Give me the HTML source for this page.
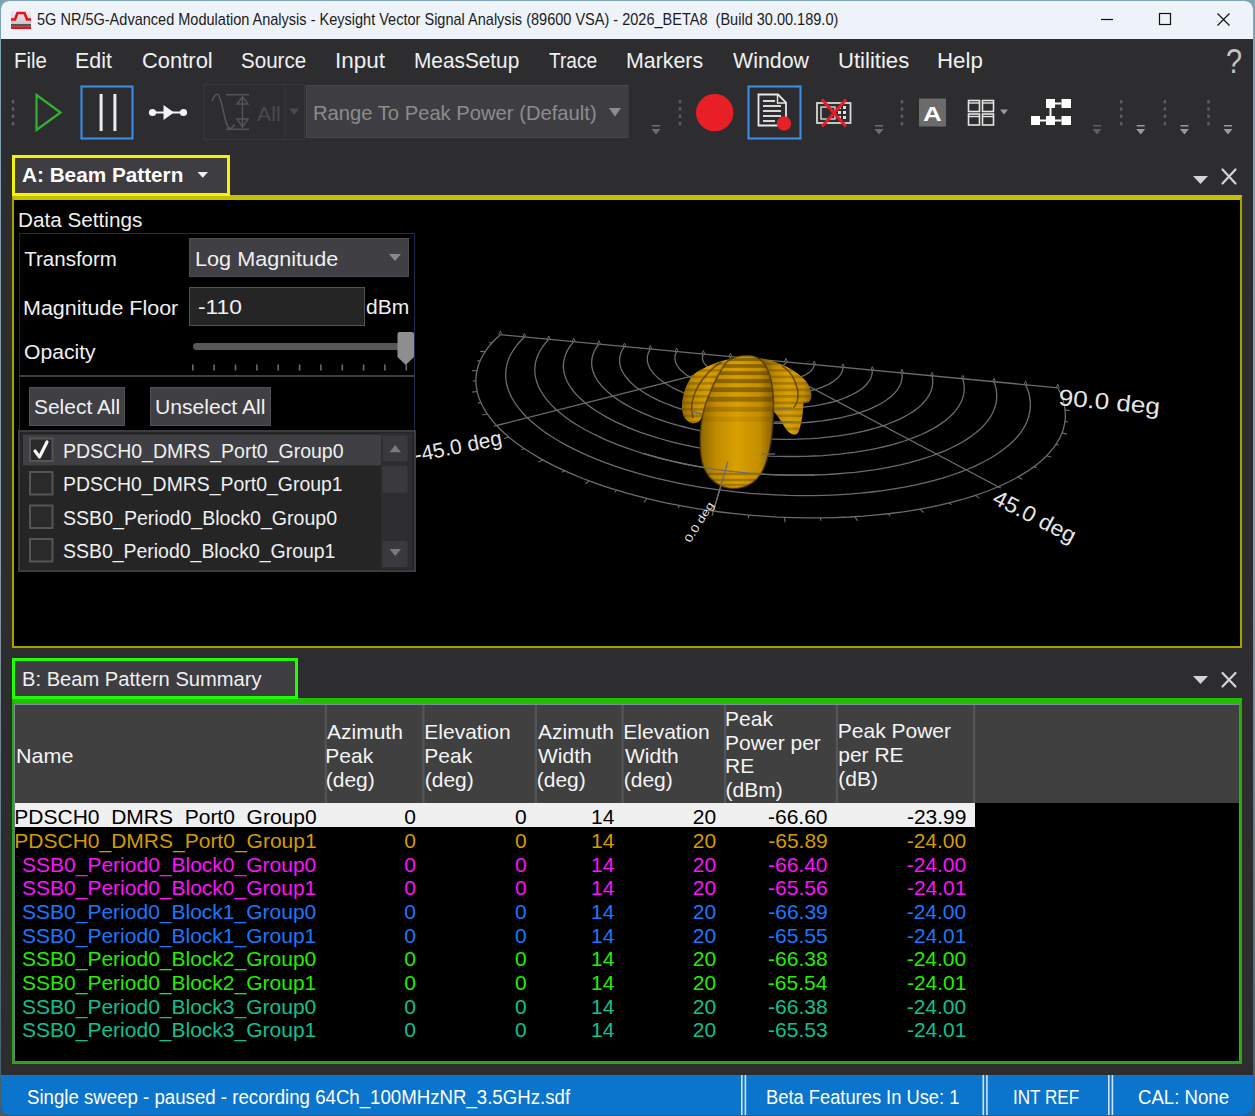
<!DOCTYPE html>
<html><head><meta charset="utf-8"><style>
html,body{margin:0;padding:0;}
body{width:1255px;height:1116px;position:relative;overflow:hidden;background:linear-gradient(180deg,#7fa3b3 0%,#8a9ba5 50%,#3f5d6a 100%);font-family:"Liberation Sans",sans-serif;}
.t{position:absolute;white-space:nowrap;transform-origin:0 0;}
.r{position:absolute;box-sizing:border-box;}
svg{position:absolute;left:0;top:0;overflow:visible;}
</style></head><body>
<div class="r" style="left:1px;top:1px;width:1252px;height:1114px;background:#2d2d30;border-radius:8px;overflow:hidden;"></div>
<div class="r" style="left:1px;top:1px;width:1252px;height:38px;background:#eef3f9;border-radius:8px 8px 0 0;"></div>
<div class="r" style="left:1px;top:1075px;width:1252px;height:40px;background:#0b74cc;border-radius:0 0 8px 8px;"></div>
<svg width="1255" height="40" style="left:0;top:0">
<defs><linearGradient id="ig" x1="0" y1="0" x2="0" y2="1"><stop offset="0" stop-color="#f4f4f4"/><stop offset="1" stop-color="#b8b8b8"/></linearGradient></defs>
<rect x="11" y="9" width="20" height="20" fill="url(#ig)"/>
<path d="M11 19.5 L15 19.5 L17.5 13 L24.5 13 L27 19.5 L31 19.5" stroke="#e8101e" stroke-width="2.6" fill="none"/>
<rect x="11" y="24" width="20" height="2.5" fill="#555"/>
<rect x="11" y="26.5" width="20" height="2.5" fill="#e8101e"/>
<line x1="1101" y1="19.5" x2="1113" y2="19.5" stroke="#111" stroke-width="1.2"/>
<rect x="1159.5" y="13.5" width="11" height="11" fill="none" stroke="#111" stroke-width="1.2"/>
<path d="M1217.5 13.5 L1229.5 25.5 M1229.5 13.5 L1217.5 25.5" stroke="#111" stroke-width="1.2"/>
</svg>
<div class="t" style="left:37.02px;top:11.55px;font-size:15.7px;line-height:15.7px;color:#1b1b1b;transform:scaleX(0.9257);">5G NR/5G-Advanced Modulation Analysis - Keysight Vector Signal Analysis (89600 VSA) - 2026_BETA8&nbsp; (Build 30.00.189.0)</div>
<div class="t" style="left:14.07px;top:50.52px;font-size:21.5px;line-height:21.5px;color:#f0f0f0;transform:scaleX(0.9490);">File</div>
<div class="t" style="left:75.29px;top:50.52px;font-size:21.5px;line-height:21.5px;color:#f0f0f0;transform:scaleX(0.9955);">Edit</div>
<div class="t" style="left:142.20px;top:50.52px;font-size:21.5px;line-height:21.5px;color:#f0f0f0;transform:scaleX(1.0200);">Control</div>
<div class="t" style="left:241.08px;top:50.52px;font-size:21.5px;line-height:21.5px;color:#f0f0f0;transform:scaleX(0.9559);">Source</div>
<div class="t" style="left:335.48px;top:50.52px;font-size:21.5px;line-height:21.5px;color:#f0f0f0;transform:scaleX(1.0460);">Input</div>
<div class="t" style="left:414.34px;top:50.52px;font-size:21.5px;line-height:21.5px;color:#f0f0f0;transform:scaleX(0.9679);">MeasSetup</div>
<div class="t" style="left:549.02px;top:50.52px;font-size:21.5px;line-height:21.5px;color:#f0f0f0;transform:scaleX(0.8886);">Trace</div>
<div class="t" style="left:625.99px;top:50.52px;font-size:21.5px;line-height:21.5px;color:#f0f0f0;transform:scaleX(0.9928);">Markers</div>
<div class="t" style="left:732.70px;top:50.52px;font-size:21.5px;line-height:21.5px;color:#f0f0f0;transform:scaleX(0.9929);">Window</div>
<div class="t" style="left:837.54px;top:50.52px;font-size:21.5px;line-height:21.5px;color:#f0f0f0;transform:scaleX(1.0273);">Utilities</div>
<div class="t" style="left:937.12px;top:50.52px;font-size:21.5px;line-height:21.5px;color:#f0f0f0;transform:scaleX(1.0360);">Help</div>
<div class="t" style="left:1226.05px;top:43.25px;font-size:35px;line-height:35px;color:#c4c4c4;transform:scaleX(0.8214);">?</div>
<svg width="1255" height="150" style="left:0;top:0">
<rect x="11.75" y="100.0" width="2.5" height="3.4" fill="#5c5c60"/><rect x="11.75" y="107.3" width="2.5" height="3.4" fill="#5c5c60"/><rect x="11.75" y="114.6" width="2.5" height="3.4" fill="#5c5c60"/><rect x="11.75" y="121.9" width="2.5" height="3.4" fill="#5c5c60"/>
<path d="M36.5 95 L60.5 112.5 L36.5 130 Z" fill="none" stroke="#32b232" stroke-width="2.2" stroke-linejoin="miter"/>
<rect x="81.5" y="86.5" width="51" height="52" fill="none" stroke="#3a8ee8" stroke-width="2.1"/>
<rect x="99.6" y="94" width="3" height="37" fill="#ececec"/>
<rect x="113.4" y="94" width="3" height="37" fill="#ececec"/>
<line x1="152" y1="112.5" x2="183" y2="112.5" stroke="#f4f4f4" stroke-width="2"/>
<circle cx="152.5" cy="112.5" r="3.6" fill="#f4f4f4"/><circle cx="183.5" cy="112.5" r="3.6" fill="#f4f4f4"/>
<path d="M163.5 105 L174 112.5 L163.5 120 Z" fill="#f4f4f4"/>
<rect x="204" y="84.5" width="100.5" height="55" fill="none" stroke="#38383b" stroke-width="1"/>
<line x1="285" y1="85" x2="285" y2="139" stroke="#38383b" stroke-width="1"/>
<path d="M212 101 C214 96 216 93.5 218 94.5 C221 96 223 112 226 122 C227.5 127 229.5 129.5 231.5 128 C233 127 234 125.5 234.5 124.5" fill="none" stroke="#545457" stroke-width="1.6"/>
<line x1="226" y1="94.7" x2="249" y2="94.7" stroke="#545457" stroke-width="1.6"/>
<line x1="242.5" y1="97" x2="242.5" y2="128" stroke="#545457" stroke-width="1.4"/>
<path d="M237 104 L242.5 97 L248 104 Z" fill="none" stroke="#545457" stroke-width="1.4"/>
<path d="M237 119 L242.5 127 L248 119 Z" fill="none" stroke="#545457" stroke-width="1.4"/>
<line x1="226" y1="129.3" x2="249" y2="129.3" stroke="#545457" stroke-width="1.6"/>
<path d="M289 108.5 L299 108.5 L294 115 Z" fill="#4a4a4d"/>
<rect x="306.5" y="85.5" width="321.5" height="52" fill="#3e3e42" stroke="#47474b" stroke-width="1"/>
<path d="M609 108 L621 108 L615 116.5 Z" fill="#8c8c8c"/>
<rect x="652" y="125" width="8" height="1.5" fill="#6e6e72"/><path d="M651.5 129 L660.5 129 L656 134.5 Z" fill="#6e6e72"/>
<rect x="678.75" y="100.0" width="2.5" height="3.4" fill="#5c5c60"/><rect x="678.75" y="107.3" width="2.5" height="3.4" fill="#5c5c60"/><rect x="678.75" y="114.6" width="2.5" height="3.4" fill="#5c5c60"/><rect x="678.75" y="121.9" width="2.5" height="3.4" fill="#5c5c60"/>
<circle cx="714.7" cy="112.6" r="18.7" fill="#e81f27"/>
<rect x="748.5" y="86.5" width="52" height="52" fill="none" stroke="#3a8ee8" stroke-width="2.1"/>
<path d="M758.5 94.5 L778 94.5 L786 102.5 L786 125.5 L758.5 125.5 Z" fill="none" stroke="#e8e8e8" stroke-width="1.8"/>
<path d="M777.5 94.5 L777.5 103 L786 103" fill="none" stroke="#e8e8e8" stroke-width="1.4"/>
<rect x="763" y="100" width="12" height="2" fill="#d8d8d8"/>
<rect x="763" y="105" width="18" height="2" fill="#d8d8d8"/>
<rect x="763" y="110" width="18" height="2" fill="#d8d8d8"/>
<rect x="763" y="115" width="18" height="2" fill="#d8d8d8"/>
<rect x="763" y="120" width="12" height="2" fill="#d8d8d8"/>
<circle cx="784" cy="123.5" r="7.2" fill="#e81f27"/>
<rect x="817" y="103" width="33.5" height="20" fill="none" stroke="#d8d8d8" stroke-width="1.8"/>
<rect x="821" y="107" width="14" height="12" fill="none" stroke="#d8d8d8" stroke-width="1.4"/>
<rect x="838" y="106" width="3" height="3" fill="#e0e0e0"/><rect x="843" y="106" width="3" height="3" fill="#e0e0e0"/>
<rect x="838" y="111" width="3" height="3" fill="#e0e0e0"/><rect x="843" y="111" width="3" height="3" fill="#e0e0e0"/>
<rect x="838" y="116" width="3" height="3" fill="#e0e0e0"/><rect x="843" y="116" width="3" height="3" fill="#e0e0e0"/>
<path d="M822 99.5 L846 126.5 M846 99.5 L822 126.5" stroke="#e41e26" stroke-width="3"/>
<rect x="875" y="125" width="8" height="1.5" fill="#6e6e72"/><path d="M874.5 129 L883.5 129 L879 134.5 Z" fill="#6e6e72"/>
<rect x="900.75" y="100.0" width="2.5" height="3.4" fill="#5c5c60"/><rect x="900.75" y="107.3" width="2.5" height="3.4" fill="#5c5c60"/><rect x="900.75" y="114.6" width="2.5" height="3.4" fill="#5c5c60"/><rect x="900.75" y="121.9" width="2.5" height="3.4" fill="#5c5c60"/>
<rect x="919" y="98.5" width="27" height="28" fill="#6b6b6b"/>
<rect x="968.5" y="100.5" width="11" height="11" fill="none" stroke="#e4e4e4" stroke-width="1.6"/>
<rect x="982.5" y="100.5" width="11" height="11" fill="none" stroke="#e4e4e4" stroke-width="1.6"/>
<rect x="968.5" y="114" width="11" height="11" fill="none" stroke="#e4e4e4" stroke-width="1.6"/>
<rect x="982.5" y="114" width="11" height="11" fill="none" stroke="#e4e4e4" stroke-width="1.6"/>
<line x1="968.5" y1="103" x2="979.5" y2="103" stroke="#e4e4e4" stroke-width="1.4"/>
<line x1="982.5" y1="103" x2="993.5" y2="103" stroke="#e4e4e4" stroke-width="1.4"/>
<line x1="968.5" y1="116.5" x2="979.5" y2="116.5" stroke="#e4e4e4" stroke-width="1.4"/>
<line x1="982.5" y1="116.5" x2="993.5" y2="116.5" stroke="#e4e4e4" stroke-width="1.4"/>
<path d="M1000 109.5 L1008 109.5 L1004 114.5 Z" fill="#9a9a9a"/>
<rect x="1046" y="99" width="9" height="9" fill="#ffffff"/>
<rect x="1061.5" y="99" width="9.5" height="9" fill="#ffffff"/>
<rect x="1031" y="116" width="9" height="9" fill="#ffffff"/>
<rect x="1046" y="116" width="9" height="9" fill="#ffffff"/>
<rect x="1061.5" y="116" width="9.5" height="9" fill="#ffffff"/>
<line x1="1055" y1="103.5" x2="1061.5" y2="103.5" stroke="#fff" stroke-width="2"/>
<line x1="1050.5" y1="108" x2="1050.5" y2="116" stroke="#fff" stroke-width="2"/>
<line x1="1040" y1="120.5" x2="1061.5" y2="120.5" stroke="#fff" stroke-width="2"/>
<rect x="1093" y="125" width="8" height="1.5" fill="#5e5e60"/><path d="M1092.5 129 L1101.5 129 L1097 134.5 Z" fill="#5e5e60"/>
<rect x="1119.95" y="100.0" width="2.5" height="3.4" fill="#5c5c60"/><rect x="1119.95" y="107.3" width="2.5" height="3.4" fill="#5c5c60"/><rect x="1119.95" y="114.6" width="2.5" height="3.4" fill="#5c5c60"/><rect x="1119.95" y="121.9" width="2.5" height="3.4" fill="#5c5c60"/>
<rect x="1136.7" y="125" width="8" height="1.5" fill="#9a9a9a"/><path d="M1136.2 129 L1145.2 129 L1140.7 134.5 Z" fill="#9a9a9a"/>
<rect x="1163.65" y="100.0" width="2.5" height="3.4" fill="#5c5c60"/><rect x="1163.65" y="107.3" width="2.5" height="3.4" fill="#5c5c60"/><rect x="1163.65" y="114.6" width="2.5" height="3.4" fill="#5c5c60"/><rect x="1163.65" y="121.9" width="2.5" height="3.4" fill="#5c5c60"/>
<rect x="1180.4" y="125" width="8" height="1.5" fill="#9a9a9a"/><path d="M1179.9 129 L1188.9 129 L1184.4 134.5 Z" fill="#9a9a9a"/>
<rect x="1207.25" y="100.0" width="2.5" height="3.4" fill="#5c5c60"/><rect x="1207.25" y="107.3" width="2.5" height="3.4" fill="#5c5c60"/><rect x="1207.25" y="114.6" width="2.5" height="3.4" fill="#5c5c60"/><rect x="1207.25" y="121.9" width="2.5" height="3.4" fill="#5c5c60"/>
<rect x="1224" y="125" width="8" height="1.5" fill="#9a9a9a"/><path d="M1223.5 129 L1232.5 129 L1228 134.5 Z" fill="#9a9a9a"/>
</svg>
<div class="t" style="left:257.00px;top:104.00px;font-size:20px;line-height:20px;color:#4a4a4d;transform:scaleX(1.0619);">All</div>
<div class="t" style="left:312.98px;top:101.95px;font-size:21px;line-height:21px;color:#8c8c8c;transform:scaleX(0.9616);">Range To Peak Power (Default)</div>
<div class="t" style="left:922.85px;top:103.15px;font-size:21px;line-height:21px;color:#ffffff;font-weight:bold;transform:scaleX(1.2346);">A</div>
<div class="r" style="left:12px;top:195px;width:1230px;height:453px;background:#000;border:2px solid #a8a200;border-top:5px solid #c4c000;"></div>
<div class="r" style="left:12px;top:155px;width:218px;height:41px;background:#3d3d42;border:3px solid #f4f400;"></div>
<div class="t" style="left:22.28px;top:165.38px;font-size:20.5px;line-height:20.5px;color:#ffffff;font-weight:bold;transform:scaleX(1.0117);">A: Beam Pattern</div>
<svg width="1255" height="700" style="left:0;top:0">
<path d="M197.5 172 L208 172 L202.75 177.8 Z" fill="#f0f0f0"/>
<path d="M1193 176 L1208 176 L1200.5 184 Z" fill="#d4d4d4"/>
<path d="M1222.5 169.5 L1235.5 183.5 M1235.5 169.5 L1222.5 183.5" stroke="#d4d4d4" stroke-width="2.2" stroke-linecap="round"/>
<path d="M1193 676 L1208 676 L1200.5 684 Z" fill="#d4d4d4"/>
<path d="M1222.5 673 L1235.5 686.5 M1235.5 673 L1222.5 686.5" stroke="#d4d4d4" stroke-width="2.2" stroke-linecap="round"/>
</svg>
<svg width="1255" height="700" style="left:0;top:0">
<defs><linearGradient id="lobeg_ll1" gradientUnits="userSpaceOnUse" x1="680" y1="0" x2="737" y2="0"><stop offset="0" stop-color="#8a6300"/><stop offset="0.22" stop-color="#c08b00"/><stop offset="0.5" stop-color="#d9a000"/><stop offset="0.8" stop-color="#c28d00"/><stop offset="1" stop-color="#7e5a00"/></linearGradient><linearGradient id="lobeg_ll2" gradientUnits="userSpaceOnUse" x1="695" y1="0" x2="735" y2="0"><stop offset="0" stop-color="#8a6300"/><stop offset="0.22" stop-color="#c08b00"/><stop offset="0.5" stop-color="#d9a000"/><stop offset="0.8" stop-color="#c28d00"/><stop offset="1" stop-color="#7e5a00"/></linearGradient><linearGradient id="lobeg_rl1" gradientUnits="userSpaceOnUse" x1="764" y1="0" x2="814" y2="0"><stop offset="0" stop-color="#8a6300"/><stop offset="0.22" stop-color="#c08b00"/><stop offset="0.5" stop-color="#d9a000"/><stop offset="0.8" stop-color="#c28d00"/><stop offset="1" stop-color="#7e5a00"/></linearGradient><linearGradient id="lobeg_rl2" gradientUnits="userSpaceOnUse" x1="770" y1="0" x2="803" y2="0"><stop offset="0" stop-color="#8a6300"/><stop offset="0.22" stop-color="#c08b00"/><stop offset="0.5" stop-color="#d9a000"/><stop offset="0.8" stop-color="#c28d00"/><stop offset="1" stop-color="#7e5a00"/></linearGradient><linearGradient id="lobeg_ml" gradientUnits="userSpaceOnUse" x1="699" y1="0" x2="775" y2="0"><stop offset="0" stop-color="#8a6300"/><stop offset="0.22" stop-color="#c08b00"/><stop offset="0.5" stop-color="#d9a000"/><stop offset="0.8" stop-color="#c28d00"/><stop offset="1" stop-color="#7e5a00"/></linearGradient></defs>
<polyline points="730.4,356.7 730.3,357.0 730.2,357.4 730.2,357.8 730.1,358.1 730.2,358.5 730.2,358.9 730.3,359.3 730.4,359.7 730.6,360.0 730.8,360.4 731.0,360.8 731.2,361.2 731.5,361.6 731.9,361.9 732.2,362.3 732.6,362.7 733.0,363.0 733.5,363.4 734.0,363.8 734.5,364.1 735.1,364.5 735.6,364.8 736.3,365.1 736.9,365.5 737.6,365.8 738.3,366.1 739.0,366.4 739.7,366.7 740.5,367.0 741.3,367.3 742.1,367.5 742.9,367.8 743.8,368.1 744.7,368.3 745.6,368.5 746.5,368.7 747.4,368.9 748.4,369.1 749.3,369.3 750.3,369.5 751.3,369.6 752.3,369.8 753.3,369.9 754.3,370.0 755.3,370.1 756.3,370.2 757.3,370.3 758.3,370.3 759.3,370.4 760.3,370.4 761.4,370.4 762.4,370.4 763.4,370.4 764.4,370.4 765.3,370.3 766.3,370.3 767.3,370.2 768.2,370.1 769.2,370.0 770.1,369.9 771.0,369.8 771.9,369.6 772.8,369.5 773.6,369.3 774.5,369.1 775.3,368.9 776.0,368.7 776.8,368.5 777.5,368.3 778.3,368.1 778.9,367.8 779.6,367.6 780.2,367.3 780.8,367.0 781.4,366.7 781.9,366.4 782.4,366.1 782.9,365.8 783.3,365.5 783.7,365.1 784.1,364.8 784.5,364.5 784.8,364.1 785.0,363.8 785.3,363.4 785.5,363.0 785.6,362.7 785.8,362.3 785.9,361.9" fill="none" stroke="#6c6c6c" stroke-width="1.3"/><polyline points="703.3,354.1 703.0,354.8 702.8,355.5 702.6,356.3 702.5,357.0 702.5,357.8 702.5,358.5 702.6,359.3 702.8,360.0 703.1,360.8 703.4,361.6 703.8,362.3 704.2,363.1 704.8,363.9 705.4,364.6 706.0,365.4 706.8,366.1 707.6,366.9 708.4,367.6 709.4,368.4 710.4,369.1 711.5,369.8 712.6,370.5 713.8,371.2 715.1,371.9 716.4,372.6 717.8,373.2 719.2,373.9 720.7,374.5 722.2,375.1 723.8,375.7 725.5,376.2 727.2,376.8 728.9,377.3 730.7,377.8 732.5,378.3 734.4,378.7 736.3,379.2 738.2,379.6 740.2,380.0 742.2,380.3 744.2,380.6 746.2,380.9 748.3,381.2 750.4,381.4 752.4,381.7 754.5,381.8 756.6,382.0 758.7,382.1 760.8,382.2 762.9,382.3 765.0,382.3 767.1,382.3 769.2,382.3 771.2,382.2 773.3,382.1 775.3,382.0 777.3,381.8 779.2,381.7 781.2,381.4 783.1,381.2 784.9,380.9 786.8,380.6 788.5,380.3 790.3,380.0 792.0,379.6 793.6,379.2 795.2,378.7 796.8,378.3 798.2,377.8 799.7,377.3 801.0,376.8 802.3,376.2 803.6,375.7 804.8,375.1 805.9,374.5 806.9,373.9 807.9,373.2 808.8,372.6 809.7,371.9 810.5,371.2 811.2,370.5 811.8,369.8 812.4,369.1 812.8,368.4 813.3,367.6 813.6,366.9 813.9,366.2 814.1,365.4 814.2,364.6" fill="none" stroke="#6c6c6c" stroke-width="1.3"/><polyline points="676.6,351.5 676.1,352.6 675.7,353.7 675.3,354.8 675.1,355.9 674.9,357.0 674.9,358.1 675.0,359.3 675.2,360.4 675.4,361.6 675.8,362.7 676.3,363.9 676.9,365.0 677.6,366.2 678.4,367.4 679.3,368.5 680.4,369.7 681.5,370.8 682.7,372.0 684.1,373.1 685.5,374.2 687.1,375.3 688.8,376.4 690.5,377.5 692.4,378.6 694.3,379.6 696.4,380.6 698.5,381.6 700.8,382.6 703.1,383.6 705.5,384.5 708.0,385.4 710.6,386.2 713.2,387.1 715.9,387.9 718.7,388.6 721.6,389.4 724.5,390.0 727.5,390.7 730.5,391.3 733.5,391.9 736.6,392.4 739.8,392.8 743.0,393.3 746.2,393.7 749.4,394.0 752.7,394.3 755.9,394.5 759.2,394.7 762.4,394.9 765.7,395.0 769.0,395.0 772.2,395.0 775.4,395.0 778.6,394.9 781.8,394.7 784.9,394.5 788.0,394.3 791.0,394.0 794.0,393.7 796.9,393.3 799.8,392.8 802.6,392.4 805.3,391.8 808.0,391.3 810.6,390.7 813.1,390.0 815.5,389.3 817.9,388.6 820.1,387.9 822.2,387.1 824.3,386.2 826.3,385.4 828.1,384.5 829.9,383.6 831.5,382.6 833.1,381.6 834.5,380.6 835.8,379.6 837.0,378.6 838.1,377.5 839.1,376.4 840.0,375.3 840.8,374.2 841.4,373.1 842.0,372.0 842.4,370.8 842.7,369.7 842.9,368.5 843.0,367.4" fill="none" stroke="#6c6c6c" stroke-width="1.3"/><polyline points="650.3,349.0 649.5,350.4 648.8,351.9 648.2,353.3 647.8,354.8 647.5,356.2 647.3,357.7 647.3,359.3 647.4,360.8 647.7,362.3 648.0,363.9 648.6,365.4 649.2,367.0 650.1,368.6 651.0,370.1 652.1,371.7 653.4,373.3 654.8,374.9 656.4,376.4 658.1,378.0 659.9,379.5 661.9,381.0 664.1,382.6 666.4,384.0 668.8,385.5 671.4,387.0 674.1,388.4 676.9,389.8 679.9,391.1 683.0,392.5 686.2,393.8 689.6,395.0 693.0,396.2 696.6,397.4 700.3,398.5 704.1,399.6 707.9,400.6 711.9,401.6 716.0,402.5 720.1,403.4 724.3,404.2 728.6,404.9 732.9,405.6 737.3,406.2 741.7,406.8 746.2,407.2 750.6,407.7 755.1,408.0 759.7,408.3 764.2,408.5 768.7,408.6 773.2,408.7 777.7,408.7 782.1,408.6 786.5,408.5 790.9,408.3 795.2,408.0 799.4,407.6 803.6,407.2 807.7,406.7 811.7,406.2 815.7,405.6 819.5,404.9 823.2,404.1 826.9,403.3 830.4,402.5 833.8,401.6 837.1,400.6 840.2,399.6 843.2,398.5 846.1,397.4 848.8,396.2 851.4,395.0 853.9,393.7 856.2,392.4 858.3,391.1 860.3,389.8 862.2,388.4 863.9,387.0 865.4,385.5 866.8,384.0 868.0,382.5 869.1,381.0 870.0,379.5 870.8,378.0 871.4,376.4 871.8,374.9 872.1,373.3 872.3,371.7 872.3,370.2" fill="none" stroke="#6c6c6c" stroke-width="1.3"/><polyline points="624.4,346.6 623.2,348.3 622.2,350.0 621.4,351.8 620.7,353.6 620.2,355.5 619.8,357.4 619.6,359.2 619.6,361.2 619.7,363.1 620.0,365.0 620.6,367.0 621.2,369.0 622.1,371.0 623.2,373.0 624.4,375.0 625.9,377.0 627.5,379.0 629.3,381.0 631.3,383.0 633.5,385.0 635.9,386.9 638.5,388.9 641.3,390.8 644.2,392.7 647.4,394.6 650.7,396.5 654.3,398.3 658.0,400.1 661.8,401.8 665.9,403.5 670.1,405.2 674.5,406.8 679.0,408.3 683.7,409.8 688.5,411.2 693.5,412.6 698.5,413.9 703.7,415.1 709.0,416.3 714.5,417.3 720.0,418.3 725.5,419.2 731.2,420.1 736.9,420.8 742.7,421.5 748.5,422.0 754.3,422.5 760.2,422.9 766.0,423.1 771.9,423.3 777.7,423.4 783.5,423.4 789.3,423.3 795.0,423.1 800.7,422.8 806.2,422.5 811.7,422.0 817.1,421.4 822.4,420.8 827.6,420.0 832.7,419.2 837.6,418.3 842.4,417.3 847.0,416.2 851.5,415.1 855.8,413.8 860.0,412.6 863.9,411.2 867.7,409.8 871.3,408.3 874.8,406.7 878.0,405.1 881.0,403.5 883.8,401.8 886.5,400.0 888.9,398.3 891.1,396.4 893.1,394.6 894.9,392.7 896.5,390.8 897.9,388.9 899.1,386.9 900.1,385.0 900.9,383.0 901.5,381.0 901.9,379.0 902.1,377.0 902.1,375.0 902.0,373.0" fill="none" stroke="#6c6c6c" stroke-width="1.3"/><polyline points="598.8,344.1 597.3,346.2 595.9,348.3 594.8,350.4 593.7,352.5 592.9,354.7 592.3,357.0 591.9,359.2 591.7,361.5 591.7,363.9 591.8,366.2 592.3,368.6 592.9,371.0 593.8,373.4 594.8,375.9 596.2,378.3 597.7,380.8 599.5,383.2 601.5,385.7 603.8,388.1 606.3,390.6 609.0,393.0 612.0,395.5 615.2,397.9 618.7,400.3 622.4,402.6 626.3,404.9 630.5,407.2 634.9,409.5 639.6,411.7 644.5,413.8 649.5,415.9 654.8,418.0 660.3,419.9 666.0,421.8 671.9,423.7 678.0,425.4 684.2,427.0 690.6,428.6 697.2,430.1 703.9,431.5 710.7,432.7 717.6,433.9 724.6,435.0 731.7,435.9 738.9,436.8 746.2,437.5 753.4,438.1 760.7,438.6 768.0,439.0 775.3,439.2 782.6,439.3 789.9,439.3 797.1,439.2 804.2,438.9 811.2,438.6 818.2,438.1 825.0,437.4 831.7,436.7 838.3,435.9 844.7,434.9 850.9,433.8 857.0,432.7 862.9,431.4 868.6,430.0 874.1,428.5 879.3,426.9 884.4,425.3 889.2,423.5 893.8,421.7 898.1,419.8 902.2,417.9 906.0,415.8 909.6,413.7 912.9,411.6 916.0,409.4 918.8,407.2 921.3,404.9 923.6,402.5 925.6,400.2 927.4,397.8 928.9,395.4 930.2,393.0 931.2,390.6 931.9,388.1 932.4,385.7 932.7,383.2 932.7,380.8 932.6,378.3 932.1,375.9" fill="none" stroke="#6c6c6c" stroke-width="1.3"/><polyline points="573.7,341.7 571.7,344.1 569.9,346.5 568.3,348.9 567.0,351.4 565.8,354.0 564.9,356.6 564.2,359.2 563.7,361.9 563.4,364.7 563.4,367.4 563.7,370.2 564.2,373.0 565.0,375.9 566.0,378.8 567.3,381.7 568.9,384.6 570.8,387.6 573.0,390.5 575.4,393.5 578.1,396.4 581.2,399.3 584.5,402.3 588.1,405.2 592.1,408.1 596.3,411.0 600.8,413.8 605.6,416.6 610.7,419.4 616.1,422.1 621.8,424.7 627.8,427.3 634.0,429.8 640.5,432.3 647.3,434.6 654.3,436.9 661.5,439.0 668.9,441.1 676.6,443.1 684.5,444.9 692.5,446.6 700.7,448.2 709.1,449.7 717.6,451.1 726.2,452.3 734.9,453.3 743.6,454.2 752.5,455.0 761.3,455.6 770.2,456.1 779.1,456.4 787.9,456.5 796.7,456.5 805.5,456.4 814.1,456.0 822.7,455.6 831.1,454.9 839.3,454.2 847.4,453.2 855.4,452.2 863.1,450.9 870.6,449.6 877.9,448.1 884.9,446.5 891.7,444.8 898.2,442.9 904.5,441.0 910.4,438.9 916.1,436.7 921.4,434.5 926.5,432.1 931.2,429.7 935.6,427.1 939.7,424.6 943.5,421.9 947.0,419.2 950.1,416.5 952.9,413.7 955.4,410.9 957.6,408.0 959.4,405.1 961.0,402.2 962.2,399.3 963.2,396.3 963.8,393.4 964.2,390.5 964.2,387.5 964.0,384.6 963.5,381.7 962.8,378.8" fill="none" stroke="#6c6c6c" stroke-width="1.3"/><polyline points="548.8,339.4 546.4,342.0 544.2,344.7 542.1,347.5 540.3,350.3 538.8,353.2 537.5,356.2 536.4,359.2 535.6,362.3 535.1,365.4 534.8,368.6 534.8,371.8 535.1,375.1 535.8,378.4 536.7,381.8 537.9,385.2 539.5,388.6 541.4,392.0 543.6,395.5 546.2,398.9 549.1,402.4 552.3,405.9 556.0,409.4 559.9,412.8 564.3,416.3 569.0,419.7 574.0,423.1 579.5,426.5 585.2,429.8 591.4,433.0 597.9,436.2 604.7,439.4 611.9,442.4 619.4,445.4 627.2,448.2 635.4,451.0 643.8,453.7 652.5,456.2 661.5,458.6 670.8,460.9 680.3,463.0 690.0,465.0 699.9,466.8 709.9,468.5 720.1,469.9 730.5,471.3 740.9,472.4 751.4,473.3 762.0,474.1 772.6,474.7 783.1,475.0 793.7,475.2 804.2,475.2 814.6,475.0 824.9,474.6 835.1,474.0 845.1,473.2 854.9,472.3 864.5,471.1 873.9,469.8 883.0,468.3 891.8,466.6 900.4,464.8 908.6,462.8 916.6,460.7 924.2,458.4 931.4,456.0 938.3,453.4 944.8,450.8 950.9,448.0 956.7,445.1 962.1,442.2 967.0,439.1 971.6,436.0 975.8,432.8 979.6,429.6 983.0,426.3 986.0,422.9 988.6,419.5 990.9,416.1 992.7,412.7 994.2,409.2 995.4,405.8 996.2,402.3 996.6,398.8 996.7,395.4 996.5,391.9 996.0,388.5 995.1,385.1 994.0,381.8" fill="none" stroke="#6c6c6c" stroke-width="1.3"/><polyline points="524.4,337.0 521.4,340.0 518.7,343.0 516.2,346.1 513.9,349.3 511.9,352.5 510.1,355.8 508.6,359.2 507.4,362.7 506.6,366.2 506.0,369.8 505.7,373.5 505.7,377.2 506.1,381.0 506.8,384.8 507.9,388.7 509.4,392.6 511.2,396.6 513.4,400.5 516.1,404.6 519.1,408.6 522.5,412.7 526.3,416.7 530.6,420.8 535.3,424.8 540.4,428.8 545.9,432.9 551.9,436.8 558.4,440.8 565.2,444.6 572.5,448.4 580.2,452.2 588.3,455.8 596.9,459.4 605.8,462.8 615.1,466.2 624.8,469.4 634.9,472.4 645.3,475.3 656.0,478.1 667.0,480.7 678.3,483.1 689.9,485.3 701.6,487.3 713.6,489.1 725.7,490.7 737.9,492.1 750.3,493.3 762.7,494.2 775.1,494.9 787.6,495.4 800.0,495.6 812.3,495.6 824.6,495.3 836.7,494.8 848.6,494.1 860.3,493.2 871.8,492.0 883.0,490.6 893.9,488.9 904.5,487.1 914.8,485.1 924.7,482.8 934.3,480.4 943.4,477.8 952.1,475.0 960.3,472.1 968.2,469.0 975.5,465.8 982.4,462.5 988.9,459.0 994.8,455.5 1000.3,451.8 1005.3,448.1 1009.9,444.3 1013.9,440.5 1017.5,436.5 1020.7,432.6 1023.3,428.6 1025.6,424.6 1027.4,420.5 1028.7,416.5 1029.7,412.5 1030.2,408.4 1030.4,404.4 1030.1,400.4 1029.5,396.5 1028.6,392.5 1027.3,388.6 1025.6,384.8" fill="none" stroke="#6c6c6c" stroke-width="1.3"/><polyline points="500.3,334.7 496.7,338.0 493.4,341.3 490.4,344.7 487.6,348.2 485.1,351.8 482.8,355.5 480.9,359.2 479.2,363.1 477.9,367.0 476.9,371.0 476.2,375.1 475.9,379.3 476.0,383.6 476.5,387.9 477.3,392.3 478.6,396.7 480.3,401.2 482.4,405.8 485.0,410.4 488.0,415.0 491.5,419.7 495.5,424.4 500.0,429.0 505.0,433.7 510.4,438.4 516.4,443.1 522.9,447.7 530.0,452.3 537.5,456.9 545.6,461.4 554.1,465.8 563.2,470.1 572.8,474.3 582.9,478.5 593.4,482.4 604.4,486.3 615.9,489.9 627.7,493.4 640.0,496.7 652.7,499.9 665.7,502.8 679.0,505.4 692.6,507.9 706.4,510.1 720.5,512.0 734.7,513.7 749.0,515.1 763.5,516.2 778.0,517.1 792.4,517.6 806.9,517.9 821.2,517.9 835.5,517.6 849.5,517.0 863.3,516.1 876.9,514.9 890.2,513.5 903.2,511.8 915.8,509.8 928.0,507.6 939.8,505.1 951.1,502.4 962.0,499.5 972.4,496.3 982.2,493.0 991.5,489.5 1000.3,485.8 1008.5,482.0 1016.2,478.0 1023.2,473.9 1029.8,469.7 1035.7,465.4 1041.1,461.0 1045.9,456.5 1050.1,451.9 1053.9,447.4 1057.0,442.7 1059.7,438.1 1061.8,433.4 1063.4,428.7 1064.5,424.1 1065.2,419.4 1065.4,414.8 1065.1,410.2 1064.5,405.6 1063.4,401.1 1061.9,396.6 1060.0,392.2 1057.8,387.8" fill="none" stroke="#6c6c6c" stroke-width="1.3"/><polyline points="500.3,334.7 1057.8,387.8" fill="none" stroke="#6c6c6c" stroke-width="1.3"/><polyline points="757.9,359.3 496.6,425.5" fill="none" stroke="#6c6c6c" stroke-width="1.3"/><polyline points="757.9,359.3 713.4,511.1" fill="none" stroke="#6c6c6c" stroke-width="1.3"/><polyline points="757.9,359.3 998.1,486.7" fill="none" stroke="#6c6c6c" stroke-width="1.3"/><path d="M728.8 356.7 L730.4 353.2 L732.0 356.7" fill="none" stroke="#6c6c6c" stroke-width="1"/><path d="M784.3 361.9 L785.9 358.4 L787.5 361.9" fill="none" stroke="#6c6c6c" stroke-width="1"/><path d="M701.7 354.1 L703.3 350.6 L704.9 354.1" fill="none" stroke="#6c6c6c" stroke-width="1"/><path d="M812.6 364.6 L814.2 361.1 L815.8 364.6" fill="none" stroke="#6c6c6c" stroke-width="1"/><path d="M675.0 351.5 L676.6 348.0 L678.2 351.5" fill="none" stroke="#6c6c6c" stroke-width="1"/><path d="M841.4 367.4 L843.0 363.9 L844.6 367.4" fill="none" stroke="#6c6c6c" stroke-width="1"/><path d="M648.7 349.0 L650.3 345.5 L651.9 349.0" fill="none" stroke="#6c6c6c" stroke-width="1"/><path d="M870.7 370.2 L872.3 366.7 L873.9 370.2" fill="none" stroke="#6c6c6c" stroke-width="1"/><path d="M622.8 346.6 L624.4 343.1 L626.0 346.6" fill="none" stroke="#6c6c6c" stroke-width="1"/><path d="M900.4 373.0 L902.0 369.5 L903.6 373.0" fill="none" stroke="#6c6c6c" stroke-width="1"/><path d="M597.2 344.1 L598.8 340.6 L600.4 344.1" fill="none" stroke="#6c6c6c" stroke-width="1"/><path d="M930.5 375.9 L932.1 372.4 L933.7 375.9" fill="none" stroke="#6c6c6c" stroke-width="1"/><path d="M572.1 341.7 L573.7 338.2 L575.3 341.7" fill="none" stroke="#6c6c6c" stroke-width="1"/><path d="M961.2 378.8 L962.8 375.3 L964.4 378.8" fill="none" stroke="#6c6c6c" stroke-width="1"/><path d="M547.2 339.4 L548.8 335.9 L550.4 339.4" fill="none" stroke="#6c6c6c" stroke-width="1"/><path d="M992.4 381.8 L994.0 378.3 L995.6 381.8" fill="none" stroke="#6c6c6c" stroke-width="1"/><path d="M522.8 337.0 L524.4 333.5 L526.0 337.0" fill="none" stroke="#6c6c6c" stroke-width="1"/><path d="M1024.0 384.8 L1025.6 381.3 L1027.2 384.8" fill="none" stroke="#6c6c6c" stroke-width="1"/><path d="M498.7 334.7 L500.3 331.2 L501.9 334.7" fill="none" stroke="#6c6c6c" stroke-width="1"/><path d="M1056.2 387.8 L1057.8 384.3 L1059.4 387.8" fill="none" stroke="#6c6c6c" stroke-width="1"/><line x1="492.0" y1="342.9" x2="489.0" y2="342.7" stroke="#6c6c6c" stroke-width="1.1"/><line x1="485.2" y1="351.6" x2="480.2" y2="351.4" stroke="#6c6c6c" stroke-width="1.1"/><line x1="480.1" y1="360.8" x2="477.1" y2="360.8" stroke="#6c6c6c" stroke-width="1.1"/><line x1="477.0" y1="370.6" x2="472.0" y2="370.8" stroke="#6c6c6c" stroke-width="1.1"/><line x1="475.9" y1="380.8" x2="472.9" y2="381.1" stroke="#6c6c6c" stroke-width="1.1"/><line x1="477.2" y1="391.5" x2="472.2" y2="392.1" stroke="#6c6c6c" stroke-width="1.1"/><line x1="480.9" y1="402.6" x2="477.9" y2="403.1" stroke="#6c6c6c" stroke-width="1.1"/><line x1="487.3" y1="414.0" x2="482.4" y2="415.0" stroke="#6c6c6c" stroke-width="1.1"/><line x1="496.6" y1="425.5" x2="493.7" y2="426.3" stroke="#6c6c6c" stroke-width="1.1"/><line x1="508.9" y1="437.1" x2="504.1" y2="438.6" stroke="#6c6c6c" stroke-width="1.1"/><line x1="524.3" y1="448.6" x2="521.5" y2="449.7" stroke="#6c6c6c" stroke-width="1.1"/><line x1="542.8" y1="459.9" x2="538.3" y2="462.0" stroke="#6c6c6c" stroke-width="1.1"/><line x1="564.5" y1="470.7" x2="561.9" y2="472.2" stroke="#6c6c6c" stroke-width="1.1"/><line x1="589.2" y1="480.9" x2="585.2" y2="483.8" stroke="#6c6c6c" stroke-width="1.1"/><line x1="616.8" y1="490.2" x2="614.6" y2="492.3" stroke="#6c6c6c" stroke-width="1.1"/><line x1="647.0" y1="498.5" x2="643.9" y2="502.4" stroke="#6c6c6c" stroke-width="1.1"/><line x1="679.4" y1="505.5" x2="677.9" y2="508.1" stroke="#6c6c6c" stroke-width="1.1"/><line x1="713.4" y1="511.1" x2="712.0" y2="515.9" stroke="#6c6c6c" stroke-width="1.1"/><line x1="748.6" y1="515.1" x2="748.5" y2="518.1" stroke="#6c6c6c" stroke-width="1.1"/><line x1="784.4" y1="517.4" x2="785.2" y2="522.3" stroke="#6c6c6c" stroke-width="1.1"/><line x1="820.0" y1="517.9" x2="821.1" y2="520.7" stroke="#6c6c6c" stroke-width="1.1"/><line x1="854.9" y1="516.7" x2="857.5" y2="520.9" stroke="#6c6c6c" stroke-width="1.1"/><line x1="888.4" y1="513.7" x2="890.3" y2="516.0" stroke="#6c6c6c" stroke-width="1.1"/><line x1="919.9" y1="509.1" x2="923.6" y2="512.5" stroke="#6c6c6c" stroke-width="1.1"/><line x1="949.0" y1="502.9" x2="951.4" y2="504.7" stroke="#6c6c6c" stroke-width="1.1"/><line x1="975.1" y1="495.4" x2="979.4" y2="498.1" stroke="#6c6c6c" stroke-width="1.1"/><line x1="998.1" y1="486.7" x2="1000.8" y2="488.1" stroke="#6c6c6c" stroke-width="1.1"/><line x1="1017.8" y1="477.1" x2="1022.3" y2="479.2" stroke="#6c6c6c" stroke-width="1.1"/><line x1="1033.9" y1="466.7" x2="1036.7" y2="467.8" stroke="#6c6c6c" stroke-width="1.1"/><line x1="1046.6" y1="455.7" x2="1051.4" y2="457.3" stroke="#6c6c6c" stroke-width="1.1"/><line x1="1055.9" y1="444.4" x2="1058.8" y2="445.2" stroke="#6c6c6c" stroke-width="1.1"/><line x1="1062.0" y1="432.9" x2="1066.9" y2="434.1" stroke="#6c6c6c" stroke-width="1.1"/><line x1="1065.0" y1="421.4" x2="1067.9" y2="422.0" stroke="#6c6c6c" stroke-width="1.1"/><line x1="1065.1" y1="409.9" x2="1070.0" y2="410.7" stroke="#6c6c6c" stroke-width="1.1"/><line x1="1062.6" y1="398.7" x2="1065.6" y2="399.1" stroke="#6c6c6c" stroke-width="1.1"/>
<clipPath id="ll1"><path d="M734.6 358 C722 360 705 366 694 374 C686 383 682 395 682 407 C682 416 686 422 692 423 C697 424 700 421 702 417 L712 405 C714 392 720 380 728 369 C731 364 733 360 734.6 358 Z"/></clipPath><path d="M734.6 358 C722 360 705 366 694 374 C686 383 682 395 682 407 C682 416 686 422 692 423 C697 424 700 421 702 417 L712 405 C714 392 720 380 728 369 C731 364 733 360 734.6 358 Z" fill="url(#lobeg_ll1)" stroke="#4a3300" stroke-opacity="0" stroke-width="1.6"/><g clip-path="url(#ll1)"><rect x="640" y="356.0" width="200" height="2.7" fill="#5c4100" fill-opacity="0.35"/><rect x="640" y="362.5" width="200" height="2.7" fill="#5c4100" fill-opacity="0.35"/><rect x="640" y="369.0" width="200" height="2.7" fill="#5c4100" fill-opacity="0.35"/><rect x="640" y="375.5" width="200" height="2.7" fill="#5c4100" fill-opacity="0.35"/><rect x="640" y="382.0" width="200" height="2.7" fill="#5c4100" fill-opacity="0.35"/><rect x="640" y="388.5" width="200" height="2.7" fill="#5c4100" fill-opacity="0.35"/><rect x="640" y="395.0" width="200" height="2.7" fill="#5c4100" fill-opacity="0.35"/><rect x="640" y="401.5" width="200" height="2.7" fill="#5c4100" fill-opacity="0.35"/><rect x="640" y="408.0" width="200" height="2.7" fill="#5c4100" fill-opacity="0.35"/><rect x="640" y="414.5" width="200" height="2.7" fill="#5c4100" fill-opacity="0.35"/><rect x="640" y="421.0" width="200" height="2.7" fill="#5c4100" fill-opacity="0.35"/><rect x="640" y="427.5" width="200" height="2.7" fill="#5c4100" fill-opacity="0.35"/></g>

<clipPath id="rl1"><path d="M760 358 C782 362 797 371 806 381 C812 389 813 398 809 402 L803.5 403 C803 412 802 425 797.7 433.3 C795 436 789 434 786 429 C782 423 778 415 772 410 L766 395 C766 382 764 370 760 358 Z"/></clipPath><path d="M760 358 C782 362 797 371 806 381 C812 389 813 398 809 402 L803.5 403 C803 412 802 425 797.7 433.3 C795 436 789 434 786 429 C782 423 778 415 772 410 L766 395 C766 382 764 370 760 358 Z" fill="url(#lobeg_rl1)" stroke="#4a3300" stroke-opacity="0" stroke-width="1.6"/><g clip-path="url(#rl1)"><rect x="640" y="356.0" width="200" height="2.7" fill="#5c4100" fill-opacity="0.35"/><rect x="640" y="362.5" width="200" height="2.7" fill="#5c4100" fill-opacity="0.35"/><rect x="640" y="369.0" width="200" height="2.7" fill="#5c4100" fill-opacity="0.35"/><rect x="640" y="375.5" width="200" height="2.7" fill="#5c4100" fill-opacity="0.35"/><rect x="640" y="382.0" width="200" height="2.7" fill="#5c4100" fill-opacity="0.35"/><rect x="640" y="388.5" width="200" height="2.7" fill="#5c4100" fill-opacity="0.35"/><rect x="640" y="395.0" width="200" height="2.7" fill="#5c4100" fill-opacity="0.35"/><rect x="640" y="401.5" width="200" height="2.7" fill="#5c4100" fill-opacity="0.35"/><rect x="640" y="408.0" width="200" height="2.7" fill="#5c4100" fill-opacity="0.35"/><rect x="640" y="414.5" width="200" height="2.7" fill="#5c4100" fill-opacity="0.35"/><rect x="640" y="421.0" width="200" height="2.7" fill="#5c4100" fill-opacity="0.35"/><rect x="640" y="427.5" width="200" height="2.7" fill="#5c4100" fill-opacity="0.35"/><rect x="640" y="434.0" width="200" height="2.7" fill="#5c4100" fill-opacity="0.35"/></g>

<path d="M721.7 361.5 C712 368 703 377 697 388 C692 398 690 408 693 418" fill="none" stroke="#5a4000" stroke-width="1.6" stroke-opacity="0.8"/><path d="M782 365.8 C789 370 795 378 797.7 390 C799 398 797 404 793.4 408" fill="none" stroke="#5a4000" stroke-width="1.6" stroke-opacity="0.8"/><path d="M809 402 L803.5 403" stroke="#5a4000" stroke-width="1.2"/><clipPath id="ml"><path d="M749 355.5 C765 356 772 372 773.5 400 C774 430 770 455 763 470 C756 484 744 488.5 733 488.5 C718 488 706 478 702 462 C699 448 699 420 707 400 C713 384 722 366 729 360 C735 356 742 355.5 749 355.5 Z"/></clipPath><path d="M749 355.5 C765 356 772 372 773.5 400 C774 430 770 455 763 470 C756 484 744 488.5 733 488.5 C718 488 706 478 702 462 C699 448 699 420 707 400 C713 384 722 366 729 360 C735 356 742 355.5 749 355.5 Z" fill="url(#lobeg_ml)" stroke="#4a3300" stroke-opacity="0.7" stroke-width="1.6"/><g clip-path="url(#ml)"></g><g clip-path="url(#ml)"><rect x="640" y="357.9" width="200" height="3.2" fill="#4a3400" fill-opacity="0.50"/><rect x="640" y="364.2" width="200" height="3.6" fill="#4a3400" fill-opacity="0.50"/><rect x="640" y="371.2" width="200" height="3.9" fill="#4a3400" fill-opacity="0.50"/><rect x="640" y="378.9" width="200" height="4.3" fill="#4a3400" fill-opacity="0.50"/><rect x="640" y="387.3" width="200" height="4.8" fill="#4a3400" fill-opacity="0.50"/><rect x="640" y="396.7" width="200" height="5.0" fill="#4a3400" fill-opacity="0.43"/><rect x="640" y="406.7" width="200" height="5.0" fill="#4a3400" fill-opacity="0.26"/><rect x="640" y="416.7" width="200" height="5.0" fill="#4a3400" fill-opacity="0.10"/><rect x="640" y="426.7" width="200" height="5.0" fill="#4a3400" fill-opacity="0.00"/><rect x="640" y="436.7" width="200" height="5.0" fill="#4a3400" fill-opacity="0.00"/><rect x="640" y="472.8" width="200" height="2.4" fill="#4a3400" fill-opacity="0.35"/><rect x="640" y="478.8" width="200" height="2.4" fill="#4a3400" fill-opacity="0.35"/><rect x="640" y="483.8" width="200" height="2.4" fill="#4a3400" fill-opacity="0.35"/></g>
<polyline points="643.8,453.7 657.4,457.5 671.6,461.1 686.4,464.3 701.7,467.1 717.3,469.6 733.3,471.6 749.5,473.2 765.8,474.3 782.2,475.0 798.5,475.2 814.6,475.0" fill="none" stroke="#6c6c6c" stroke-width="1.3"/>
<polyline points="727.9,461.5 713.4,511.1" fill="none" stroke="#6c6c6c" stroke-width="1.3"/>
<line x1="690" y1="411" x2="702" y2="414" stroke="#6c6c6c" stroke-width="1.3"/>
<line x1="775" y1="408" x2="792" y2="408" stroke="#6c6c6c" stroke-width="1.3"/>
<line x1="774" y1="422" x2="793" y2="422" stroke="#6c6c6c" stroke-width="1.3"/>
<line x1="762" y1="454" x2="775" y2="454" stroke="#6c6c6c" stroke-width="1.3"/>
</svg>
<div class="t" style="left:1058.46px;top:386.45px;font-size:23px;line-height:23px;color:#e6e6e6;transform-origin:1.04px 19.55px;transform:rotate(5.5deg) scaleX(1.1372) ;">90.0 deg</div>
<div class="t" style="left:415.66px;top:443.65px;font-size:21px;line-height:21px;color:#e6e6e6;transform-origin:0.84px 17.85px;transform:rotate(-11.5deg) scaleX(1.0000) ;">-45.0 deg</div>
<div class="t" style="left:991.06px;top:485.30px;font-size:22px;line-height:22px;color:#e6e6e6;transform-origin:0.44px 18.70px;transform:rotate(27deg) scaleX(1.0499) ;">45.0 deg</div>
<div class="t" style="left:689.51px;top:531.10px;font-size:14px;line-height:14px;color:#e6e6e6;transform-origin:0.49px 11.90px;transform:rotate(-58deg) scaleX(0.9700) scaleY(0.78);">0.0 deg</div>
<div class="t" style="left:17.84px;top:209.97px;font-size:20.5px;line-height:20.5px;color:#f0f0f0;transform:scaleX(1.0096);">Data Settings</div>
<div class="r" style="left:19px;top:233px;width:396px;height:144px;border:1px solid #1b2d4c;border-bottom:none;"></div>
<div class="r" style="left:19px;top:375px;width:396px;height:2px;background:#3f3f3f;"></div>
<div class="r" style="left:19px;top:377px;width:1px;height:54px;background:#1b2d4c;"></div>
<div class="r" style="left:414px;top:377px;width:1px;height:54px;background:#1b2d4c;"></div>
<div class="t" style="left:24.29px;top:249.07px;font-size:20.5px;line-height:20.5px;color:#f0f0f0;">Transform</div>
<div class="t" style="left:22.98px;top:297.97px;font-size:20.5px;line-height:20.5px;color:#f0f0f0;transform:scaleX(1.0481);">Magnitude Floor</div>
<div class="t" style="left:23.75px;top:342.27px;font-size:20.5px;line-height:20.5px;color:#f0f0f0;transform:scaleX(1.0296);">Opacity</div>
<div class="r" style="left:189px;top:238px;width:220px;height:39px;background:#3f3f44;border:1px solid #4b4b50;"></div>
<div class="t" style="left:195.47px;top:249.27px;font-size:20.5px;line-height:20.5px;color:#f0f0f0;transform:scaleX(1.0560);">Log Magnitude</div>
<div class="r" style="left:189px;top:287px;width:176px;height:39px;background:#252526;border:1px solid #535353;"></div>
<div class="t" style="left:197.79px;top:297.47px;font-size:20.5px;line-height:20.5px;color:#f0f0f0;transform:scaleX(1.1101);">-110</div>
<div class="t" style="left:365.66px;top:297.47px;font-size:20.5px;line-height:20.5px;color:#f0f0f0;transform:scaleX(1.0255);">dBm</div>
<svg width="430" height="600" style="left:0;top:0">
<path d="M389 254 L401 254 L395 261 Z" fill="#8a8a8a"/>
<rect x="193" y="343" width="215" height="7" rx="3.5" fill="#585858"/>
<rect x="192.0" y="364.5" width="1.6" height="6" fill="#6a6a6a"/><rect x="213.3" y="364.5" width="1.6" height="6" fill="#6a6a6a"/><rect x="234.7" y="364.5" width="1.6" height="6" fill="#6a6a6a"/><rect x="256.1" y="364.5" width="1.6" height="6" fill="#6a6a6a"/><rect x="277.4" y="364.5" width="1.6" height="6" fill="#6a6a6a"/><rect x="298.8" y="364.5" width="1.6" height="6" fill="#6a6a6a"/><rect x="320.1" y="364.5" width="1.6" height="6" fill="#6a6a6a"/><rect x="341.5" y="364.5" width="1.6" height="6" fill="#6a6a6a"/><rect x="362.8" y="364.5" width="1.6" height="6" fill="#6a6a6a"/><rect x="384.1" y="364.5" width="1.6" height="6" fill="#6a6a6a"/><rect x="405.5" y="364.5" width="1.6" height="6" fill="#6a6a6a"/>
<path d="M397.5 334 Q397.5 332 399.5 332 L412 332 Q414 332 414 334 L414 357 L405.75 365 L397.5 357 Z" fill="#8e8e8e"/>
<rect x="29.5" y="387.5" width="95" height="38" fill="#3f3f44" stroke="#505055" stroke-width="1"/>
<rect x="150.5" y="387.5" width="120" height="38" fill="#3f3f44" stroke="#505055" stroke-width="1"/>
<rect x="19" y="431" width="396" height="140" fill="#252526" stroke="#3c3c3e" stroke-width="2"/>
<rect x="23" y="434.5" width="358" height="31" fill="#3f3f44"/>
<rect x="381" y="433" width="31" height="136" fill="#2d2d30"/>
<rect x="382.5" y="435.5" width="25" height="26" fill="#3a3a3e"/>
<rect x="382.5" y="466" width="25" height="26.5" fill="#3a3a3e"/>
<rect x="382.5" y="541" width="25" height="26" fill="#3a3a3e"/>
<path d="M389.5 452.2 L401 452.2 L395.25 445 Z" fill="#7a7a7a"/>
<path d="M389.5 549 L401 549 L395.25 556 Z" fill="#7a7a7a"/>
</svg>
<div class="t" style="left:33.76px;top:396.97px;font-size:20.5px;line-height:20.5px;color:#f0f0f0;transform:scaleX(1.0219);">Select All</div>
<div class="t" style="left:155.31px;top:397.07px;font-size:20.5px;line-height:20.5px;color:#f0f0f0;transform:scaleX(1.0312);">Unselect All</div>
<div class="t" style="left:62.74px;top:440.88px;font-size:20.5px;line-height:20.5px;color:#f0f0f0;transform:scaleX(0.9507);">PDSCH0_DMRS_Port0_Group0</div>
<div class="t" style="left:62.75px;top:474.32px;font-size:20.5px;line-height:20.5px;color:#f0f0f0;transform:scaleX(0.9476);">PDSCH0_DMRS_Port0_Group1</div>
<div class="t" style="left:63.42px;top:507.78px;font-size:20.5px;line-height:20.5px;color:#f0f0f0;transform:scaleX(0.9542);">SSB0_Period0_Block0_Group0</div>
<div class="t" style="left:63.42px;top:541.23px;font-size:20.5px;line-height:20.5px;color:#f0f0f0;transform:scaleX(0.9486);">SSB0_Period0_Block0_Group1</div>
<svg width="430" height="600" style="left:0;top:0"><rect x="30" y="438.5" width="22.5" height="22.5" fill="#2a2a2b" stroke="#555557" stroke-width="2"/><rect x="30" y="472.0" width="22.5" height="22.5" fill="#2a2a2b" stroke="#555557" stroke-width="2"/><rect x="30" y="505.5" width="22.5" height="22.5" fill="#2a2a2b" stroke="#555557" stroke-width="2"/><rect x="30" y="539.0" width="22.5" height="22.5" fill="#2a2a2b" stroke="#555557" stroke-width="2"/><path d="M35 451 L39.5 457 L47 442" fill="none" stroke="#f4f4f4" stroke-width="3.2" stroke-linecap="round" stroke-linejoin="round"/></svg>
<div class="r" style="left:12px;top:698px;width:1230px;height:366px;background:#000;border:2px solid #22b000;border-top:6px solid #22c000;border-bottom:3px solid #2aa41a;"></div>
<div class="r" style="left:12px;top:658px;width:286px;height:41px;background:#3d3d42;border:3px solid #22ff00;"></div>
<div class="t" style="left:22.09px;top:668.78px;font-size:20.5px;line-height:20.5px;color:#f0f0f0;transform:scaleX(0.9826);">B: Beam Pattern Summary</div>
<div class="r" style="left:14px;top:704px;width:1226px;height:99px;background:#404040;border-left:1px solid #7d8aa0;border-top:1px solid #7d8aa0;"></div>
<div class="r" style="left:1239px;top:704px;width:1px;height:357px;background:#6a7a90;"></div>
<div class="r" style="left:14px;top:803px;width:1px;height:258px;background:#6a7a90;"></div>
<svg width="1255" height="1116" style="left:0;top:0"><rect x="324.7" y="705" width="2.2" height="98" fill="#555558"/><rect x="422.3" y="705" width="2.2" height="98" fill="#555558"/><rect x="534.8" y="705" width="2.2" height="98" fill="#555558"/><rect x="621.5" y="705" width="2.2" height="98" fill="#555558"/><rect x="724.0" y="705" width="2.2" height="98" fill="#555558"/><rect x="835.8" y="705" width="2.2" height="98" fill="#555558"/><rect x="973.0" y="705" width="2.2" height="98" fill="#555558"/></svg>
<div class="r" style="left:15px;top:803px;width:960px;height:24px;background:#f0f0f0;"></div>
<div class="t" style="left:15.98px;top:744.55px;font-size:21px;line-height:21px;color:#f4f4f4;transform:scaleX(1.0254);">Name</div>
<div class="t" style="left:327.00px;top:721.45px;font-size:21px;line-height:21px;color:#f4f4f4;">Azimuth</div>
<div class="t" style="left:325.32px;top:745.00px;font-size:21px;line-height:21px;color:#f4f4f4;">Peak</div>
<div class="t" style="left:325.74px;top:768.55px;font-size:21px;line-height:21px;color:#f4f4f4;">(deg)</div>
<div class="t" style="left:424.32px;top:721.45px;font-size:21px;line-height:21px;color:#f4f4f4;">Elevation</div>
<div class="t" style="left:424.32px;top:745.00px;font-size:21px;line-height:21px;color:#f4f4f4;">Peak</div>
<div class="t" style="left:424.74px;top:768.55px;font-size:21px;line-height:21px;color:#f4f4f4;">(deg)</div>
<div class="t" style="left:538.00px;top:721.45px;font-size:21px;line-height:21px;color:#f4f4f4;">Azimuth</div>
<div class="t" style="left:538.00px;top:745.00px;font-size:21px;line-height:21px;color:#f4f4f4;">Width</div>
<div class="t" style="left:536.74px;top:768.55px;font-size:21px;line-height:21px;color:#f4f4f4;">(deg)</div>
<div class="t" style="left:623.32px;top:721.45px;font-size:21px;line-height:21px;color:#f4f4f4;">Elevation</div>
<div class="t" style="left:625.00px;top:745.00px;font-size:21px;line-height:21px;color:#f4f4f4;">Width</div>
<div class="t" style="left:623.74px;top:768.55px;font-size:21px;line-height:21px;color:#f4f4f4;">(deg)</div>
<div class="t" style="left:725.12px;top:707.95px;font-size:21px;line-height:21px;color:#f4f4f4;">Peak</div>
<div class="t" style="left:725.12px;top:731.50px;font-size:21px;line-height:21px;color:#f4f4f4;">Power per</div>
<div class="t" style="left:725.12px;top:755.05px;font-size:21px;line-height:21px;color:#f4f4f4;">RE</div>
<div class="t" style="left:725.54px;top:778.60px;font-size:21px;line-height:21px;color:#f4f4f4;">(dBm)</div>
<div class="t" style="left:837.82px;top:720.45px;font-size:21px;line-height:21px;color:#f4f4f4;">Peak Power</div>
<div class="t" style="left:838.24px;top:744.00px;font-size:21px;line-height:21px;color:#f4f4f4;">per RE</div>
<div class="t" style="left:838.24px;top:767.55px;font-size:21px;line-height:21px;color:#f4f4f4;">(dB)</div>
<div class="t" style="left:14.32px;top:806.15px;font-size:21px;line-height:21px;color:#000000;">PDSCH0_DMRS_Port0_Group0</div>
<div class="t" style="left:404.28px;top:806.15px;font-size:21px;line-height:21px;color:#000000;">0</div>
<div class="t" style="left:515.08px;top:806.15px;font-size:21px;line-height:21px;color:#000000;">0</div>
<div class="t" style="left:591.01px;top:806.15px;font-size:21px;line-height:21px;color:#000000;">14</div>
<div class="t" style="left:692.83px;top:806.15px;font-size:21px;line-height:21px;color:#000000;">20</div>
<div class="t" style="left:768.00px;top:806.15px;font-size:21px;line-height:21px;color:#000000;">-66.60</div>
<div class="t" style="left:906.91px;top:806.15px;font-size:21px;line-height:21px;color:#000000;">-23.99</div>
<div class="t" style="left:14.32px;top:829.85px;font-size:21px;line-height:21px;color:#d49a00;">PDSCH0_DMRS_Port0_Group1</div>
<div class="t" style="left:404.28px;top:829.85px;font-size:21px;line-height:21px;color:#d49a00;">0</div>
<div class="t" style="left:515.08px;top:829.85px;font-size:21px;line-height:21px;color:#d49a00;">0</div>
<div class="t" style="left:591.01px;top:829.85px;font-size:21px;line-height:21px;color:#d49a00;">14</div>
<div class="t" style="left:692.83px;top:829.85px;font-size:21px;line-height:21px;color:#d49a00;">20</div>
<div class="t" style="left:768.21px;top:829.85px;font-size:21px;line-height:21px;color:#d49a00;">-65.89</div>
<div class="t" style="left:906.70px;top:829.85px;font-size:21px;line-height:21px;color:#d49a00;">-24.00</div>
<div class="t" style="left:22.05px;top:853.55px;font-size:21px;line-height:21px;color:#ff10ff;">SSB0_Period0_Block0_Group0</div>
<div class="t" style="left:404.28px;top:853.55px;font-size:21px;line-height:21px;color:#ff10ff;">0</div>
<div class="t" style="left:515.08px;top:853.55px;font-size:21px;line-height:21px;color:#ff10ff;">0</div>
<div class="t" style="left:591.01px;top:853.55px;font-size:21px;line-height:21px;color:#ff10ff;">14</div>
<div class="t" style="left:692.83px;top:853.55px;font-size:21px;line-height:21px;color:#ff10ff;">20</div>
<div class="t" style="left:768.00px;top:853.55px;font-size:21px;line-height:21px;color:#ff10ff;">-66.40</div>
<div class="t" style="left:906.70px;top:853.55px;font-size:21px;line-height:21px;color:#ff10ff;">-24.00</div>
<div class="t" style="left:22.05px;top:877.25px;font-size:21px;line-height:21px;color:#ff10ff;">SSB0_Period0_Block0_Group1</div>
<div class="t" style="left:404.28px;top:877.25px;font-size:21px;line-height:21px;color:#ff10ff;">0</div>
<div class="t" style="left:515.08px;top:877.25px;font-size:21px;line-height:21px;color:#ff10ff;">0</div>
<div class="t" style="left:591.01px;top:877.25px;font-size:21px;line-height:21px;color:#ff10ff;">14</div>
<div class="t" style="left:692.83px;top:877.25px;font-size:21px;line-height:21px;color:#ff10ff;">20</div>
<div class="t" style="left:768.10px;top:877.25px;font-size:21px;line-height:21px;color:#ff10ff;">-65.56</div>
<div class="t" style="left:906.91px;top:877.25px;font-size:21px;line-height:21px;color:#ff10ff;">-24.01</div>
<div class="t" style="left:22.05px;top:900.95px;font-size:21px;line-height:21px;color:#1a78ff;">SSB0_Period0_Block1_Group0</div>
<div class="t" style="left:404.28px;top:900.95px;font-size:21px;line-height:21px;color:#1a78ff;">0</div>
<div class="t" style="left:515.08px;top:900.95px;font-size:21px;line-height:21px;color:#1a78ff;">0</div>
<div class="t" style="left:591.01px;top:900.95px;font-size:21px;line-height:21px;color:#1a78ff;">14</div>
<div class="t" style="left:692.83px;top:900.95px;font-size:21px;line-height:21px;color:#1a78ff;">20</div>
<div class="t" style="left:768.21px;top:900.95px;font-size:21px;line-height:21px;color:#1a78ff;">-66.39</div>
<div class="t" style="left:906.70px;top:900.95px;font-size:21px;line-height:21px;color:#1a78ff;">-24.00</div>
<div class="t" style="left:22.05px;top:924.65px;font-size:21px;line-height:21px;color:#1a78ff;">SSB0_Period0_Block1_Group1</div>
<div class="t" style="left:404.28px;top:924.65px;font-size:21px;line-height:21px;color:#1a78ff;">0</div>
<div class="t" style="left:515.08px;top:924.65px;font-size:21px;line-height:21px;color:#1a78ff;">0</div>
<div class="t" style="left:591.01px;top:924.65px;font-size:21px;line-height:21px;color:#1a78ff;">14</div>
<div class="t" style="left:692.83px;top:924.65px;font-size:21px;line-height:21px;color:#1a78ff;">20</div>
<div class="t" style="left:768.10px;top:924.65px;font-size:21px;line-height:21px;color:#1a78ff;">-65.55</div>
<div class="t" style="left:906.91px;top:924.65px;font-size:21px;line-height:21px;color:#1a78ff;">-24.01</div>
<div class="t" style="left:22.05px;top:948.35px;font-size:21px;line-height:21px;color:#22ee00;">SSB0_Period0_Block2_Group0</div>
<div class="t" style="left:404.28px;top:948.35px;font-size:21px;line-height:21px;color:#22ee00;">0</div>
<div class="t" style="left:515.08px;top:948.35px;font-size:21px;line-height:21px;color:#22ee00;">0</div>
<div class="t" style="left:591.01px;top:948.35px;font-size:21px;line-height:21px;color:#22ee00;">14</div>
<div class="t" style="left:692.83px;top:948.35px;font-size:21px;line-height:21px;color:#22ee00;">20</div>
<div class="t" style="left:768.10px;top:948.35px;font-size:21px;line-height:21px;color:#22ee00;">-66.38</div>
<div class="t" style="left:906.70px;top:948.35px;font-size:21px;line-height:21px;color:#22ee00;">-24.00</div>
<div class="t" style="left:22.05px;top:972.05px;font-size:21px;line-height:21px;color:#22ee00;">SSB0_Period0_Block2_Group1</div>
<div class="t" style="left:404.28px;top:972.05px;font-size:21px;line-height:21px;color:#22ee00;">0</div>
<div class="t" style="left:515.08px;top:972.05px;font-size:21px;line-height:21px;color:#22ee00;">0</div>
<div class="t" style="left:591.01px;top:972.05px;font-size:21px;line-height:21px;color:#22ee00;">14</div>
<div class="t" style="left:692.83px;top:972.05px;font-size:21px;line-height:21px;color:#22ee00;">20</div>
<div class="t" style="left:767.79px;top:972.05px;font-size:21px;line-height:21px;color:#22ee00;">-65.54</div>
<div class="t" style="left:906.91px;top:972.05px;font-size:21px;line-height:21px;color:#22ee00;">-24.01</div>
<div class="t" style="left:22.05px;top:995.75px;font-size:21px;line-height:21px;color:#10c090;">SSB0_Period0_Block3_Group0</div>
<div class="t" style="left:404.28px;top:995.75px;font-size:21px;line-height:21px;color:#10c090;">0</div>
<div class="t" style="left:515.08px;top:995.75px;font-size:21px;line-height:21px;color:#10c090;">0</div>
<div class="t" style="left:591.01px;top:995.75px;font-size:21px;line-height:21px;color:#10c090;">14</div>
<div class="t" style="left:692.83px;top:995.75px;font-size:21px;line-height:21px;color:#10c090;">20</div>
<div class="t" style="left:768.10px;top:995.75px;font-size:21px;line-height:21px;color:#10c090;">-66.38</div>
<div class="t" style="left:906.70px;top:995.75px;font-size:21px;line-height:21px;color:#10c090;">-24.00</div>
<div class="t" style="left:22.05px;top:1019.45px;font-size:21px;line-height:21px;color:#10c090;">SSB0_Period0_Block3_Group1</div>
<div class="t" style="left:404.28px;top:1019.45px;font-size:21px;line-height:21px;color:#10c090;">0</div>
<div class="t" style="left:515.08px;top:1019.45px;font-size:21px;line-height:21px;color:#10c090;">0</div>
<div class="t" style="left:591.01px;top:1019.45px;font-size:21px;line-height:21px;color:#10c090;">14</div>
<div class="t" style="left:692.83px;top:1019.45px;font-size:21px;line-height:21px;color:#10c090;">20</div>
<div class="t" style="left:768.10px;top:1019.45px;font-size:21px;line-height:21px;color:#10c090;">-65.53</div>
<div class="t" style="left:906.91px;top:1019.45px;font-size:21px;line-height:21px;color:#10c090;">-24.01</div>
<div class="t" style="left:26.86px;top:1086.70px;font-size:20px;line-height:20px;color:#ffffff;transform:scaleX(0.9323);">Single sweep - paused - recording 64Ch_100MHzNR_3.5GHz.sdf</div>
<div class="t" style="left:766.43px;top:1086.70px;font-size:20px;line-height:20px;color:#ffffff;transform:scaleX(0.9157);">Beta Features In Use: 1</div>
<div class="t" style="left:1013.46px;top:1086.70px;font-size:20px;line-height:20px;color:#ffffff;transform:scaleX(0.8545);">INT REF</div>
<div class="t" style="left:1137.67px;top:1086.70px;font-size:20px;line-height:20px;color:#ffffff;transform:scaleX(0.9302);">CAL: None</div>
<svg width="1255" height="1116" style="left:0;top:0"><rect x="741" y="1075" width="1.6" height="40" fill="#d0e2f4"/><rect x="744.6" y="1075" width="1.6" height="40" fill="#d0e2f4"/><rect x="982.5" y="1075" width="1.6" height="40" fill="#d0e2f4"/><rect x="986.1" y="1075" width="1.6" height="40" fill="#d0e2f4"/><rect x="1108" y="1075" width="1.6" height="40" fill="#d0e2f4"/><rect x="1111.6" y="1075" width="1.6" height="40" fill="#d0e2f4"/></svg>
</body></html>
